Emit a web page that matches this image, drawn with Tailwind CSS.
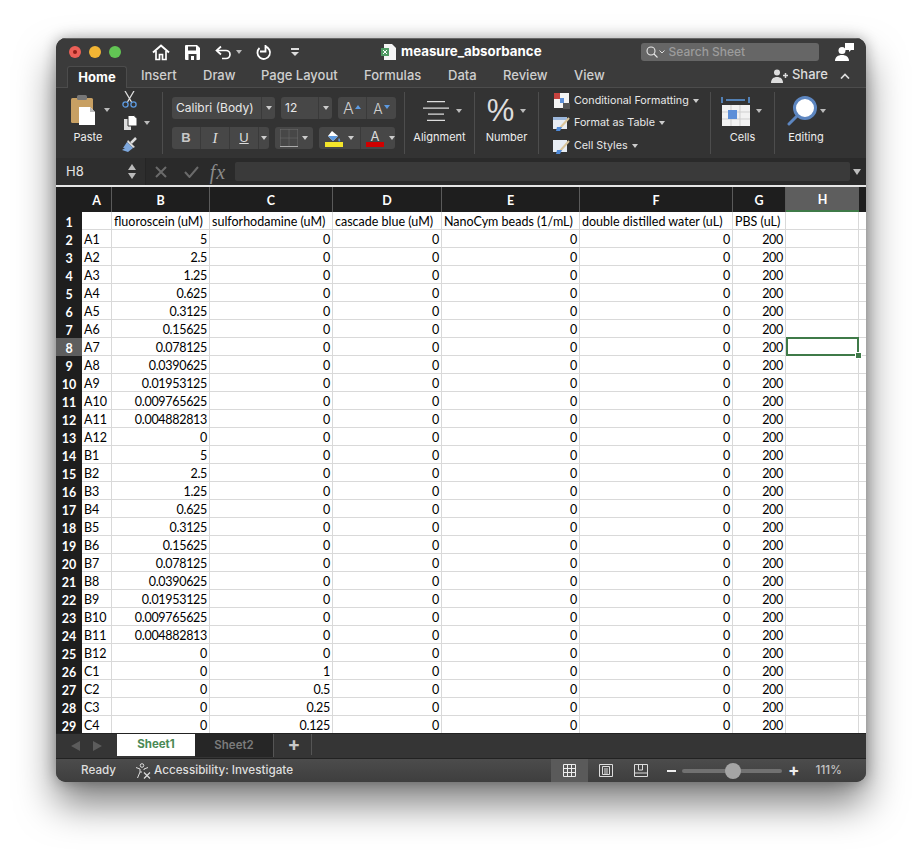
<!DOCTYPE html>
<html lang="en">
<head>
<meta charset="UTF-8">
<title>measure_absorbance</title>
<script src="https://cdn.jsdelivr.net/npm/@tailwindcss/browser@4"></script>
</head>
<body class="bg-white w-[922px] h-[856px] overflow-hidden pt-[38px] pl-[56px] font-['Inter','Roboto',sans-serif]">
<div class="w-[810px] h-[744px] rounded-[10px] overflow-hidden flex flex-col bg-[#333] shadow-[0_22px_38px_rgba(0,0,0,0.5),0_0_14px_rgba(0,0,0,0.3)] relative">

  <!-- title bar -->
  <div class="h-[27px] shrink-0 bg-[#3b3b3b] flex items-center relative border-t border-[#666]">
    <span class="w-3 h-3 rounded-full bg-[#ec5f57] ml-[13px] flex items-center justify-center"><span class="w-1 h-1 rounded-full bg-[#8f1d17]"></span></span>
    <span class="w-3 h-3 rounded-full bg-[#f2b534] ml-2"></span>
    <span class="w-3 h-3 rounded-full bg-[#62c554] ml-2"></span>
    <svg class="ml-[31px] w-[18px] h-[18px]" viewBox="0 0 18 18" fill="none" stroke="#fff" stroke-width="2"><path d="M1 9.500 9 2.500l8 7"/><path stroke-width="1.700" d="M4 8v8.500h3.500v-5h3v5H14V8"/></svg>
    <svg class="ml-[15px] w-[15px] h-[15px]" viewBox="0 0 15 15"><path fill="#fff" d="M1 0h11l3 3v11a1 1 0 0 1-1 1H1a1 1 0 0 1-1-1V1a1 1 0 0 1 1-1z"/><path fill="#3b3b3b" d="M3 1.500h8v4H3zM3.500 9h8v6h-8z"/><path fill="#fff" d="M6 11h3v4H6z"/></svg>
    <svg class="ml-[15px] w-[17px] h-[15px]" viewBox="0 0 17 15" fill="none" stroke="#fff" stroke-width="1.700"><path d="M6 1.500 1.500 5.500 6 9.500"/><path d="M2 5.500h9a4 4 0 0 1 0 8H7"/></svg>
    <span class="ml-[4px] border-x-[3px] border-t-[4px] border-x-transparent border-t-[#bbb]"></span>
    <svg class="ml-[13px] w-[17px] h-[17px]" viewBox="0 0 17 17" fill="none" stroke="#fff" stroke-width="1.800"><path d="M10 2.500a6.300 6.300 0 1 1-5.500 1.500"/><path d="M10.500 1v6.500H5"/></svg>
    <span class="ml-[19px] flex flex-col items-center gap-[2px]"><span class="w-2 h-[1.5px] bg-[#ddd]"></span><span class="border-x-[4px] border-t-[4px] border-x-transparent border-t-[#ddd]"></span></span>
    <svg class="ml-[82px] w-[15px] h-[16px]" viewBox="0 0 15 16"><path fill="#f4f4f4" d="M3 0h8l4 4v12H3z"/><path fill="#4f9a63" d="M0 4h8v8H0z"/><path stroke="#fff" d="m2 6 4 4M6 6l-4 4"/></svg>
    <span class="ml-[5px] text-white font-bold text-[13.3px]">measure_absorbance</span>
    <div class="ml-[99px] w-[178px] h-[18px] rounded-[3px] bg-[#666] flex items-center pl-[5px]">
      <svg class="w-[12px] h-[12px]" viewBox="0 0 12 12" fill="none" stroke="#e8e8e8" stroke-width="1.1"><circle cx="5" cy="5" r="4"/><path d="m8 8 3.500 3.500"/></svg>
      <svg class="w-[6px] h-[4px] ml-[1px]" viewBox="0 0 6 4" fill="none" stroke="#ddd"><path d="m.5.500 2.500 2.500L5.500.500"/></svg>
      <span class="ml-[4px] text-[12px] text-[#9c9c9c] font-medium">Search Sheet</span>
    </div>
    <svg class="ml-[16px] w-[20px] h-[18px]" viewBox="0 0 20 18"><path fill="#fff" d="M10 0h9v7h-3l-2 2V7h-4z"/><circle cx="7" cy="7.500" r="3.500" fill="#fff"/><path fill="#fff" d="M0 18c0-4 3-6 7-6s7 2 7 6z"/></svg>
  </div>

  <!-- ribbon tabs -->
  <div class="h-[23px] shrink-0 bg-[#3b3b3b] flex items-end border-b border-[#4c4c4c] text-[13px] text-[#cfcfcf] font-medium relative">
    <div class="ml-[11px] w-[60px] h-[22px] bg-[#333] border border-b-0 border-[#4c4c4c] rounded-t-[3px] text-white font-bold text-center leading-[21px] -mb-px">Home</div>
    <div class="flex h-[22px] leading-[21px] ml-[14px]">
      <span class="w-[62px]">Insert</span>
      <span class="w-[58px]">Draw</span>
      <span class="w-[103px]">Page Layout</span>
      <span class="w-[84px]">Formulas</span>
      <span class="w-[55px]">Data</span>
      <span class="w-[71px]">Review</span>
      <span class="w-[50px]">View</span>
    </div>
    <div class="ml-auto flex items-center h-[22px] mr-[16px]">
      <svg class="w-[17px] h-[14px]" viewBox="0 0 17 14"><circle cx="6" cy="3.500" r="3" fill="#ddd"/><path fill="#ddd" d="M0 14c0-4 2.500-6 6-6s6 2 6 6z"/><path stroke="#ddd" stroke-width="1.500" d="M12 6.500h5M14.500 4v5"/></svg>
      <span class="ml-[4px] text-[13px] text-[#ddd] -mt-[2px]">Share</span>
      <svg class="ml-[12px] w-[10px] h-[6px]" viewBox="0 0 10 6" fill="none" stroke="#ddd" stroke-width="1.700"><path d="m1 5.500 4-4 4 4"/></svg>
    </div>
  </div>

  <!-- ribbon -->
  <div class="h-[70px] shrink-0 bg-[#333] flex items-stretch py-1 text-[#e4e4e4] text-[11px]">
    <!-- clipboard -->
    <div class="w-[107px] shrink-0 border-r border-[#4d4d4d] flex pl-[14px]">
      <div class="w-[44px] flex flex-col items-center pr-[8px]">
        <svg class="w-[25px] h-[30px] mt-[3px] self-start ml-[1px]" viewBox="0 0 25 30"><rect x="0" y="3" width="22" height="25" rx="1.500" fill="#c8a063"/><rect x="6" y="0" width="10" height="5" rx="1.500" fill="#777"/><path fill="#fff" d="M8 12h11l5 5v13H8z"/><path fill="#bbb" d="M19 12v5h5z"/></svg>
        <span class="mt-[4px] text-[#eee]">Paste</span>
      </div>
      <span class="mt-[16px] -ml-[10px] self-start border-x-[3px] border-t-[4px] border-x-transparent border-t-[#bbb]"></span>
      <div class="ml-[12px] flex flex-col items-start gap-[7px] mt-[-1px] relative">
        <svg class="w-[15px] h-[17px]" viewBox="0 0 15 17" fill="none"><path stroke="#ddd" stroke-width="1.300" d="m3 0 6.500 11M12 0 5.500 11"/><circle cx="3.500" cy="13.500" r="2.600" stroke="#5d9ae0" stroke-width="1.300"/><circle cx="11.500" cy="13.500" r="2.600" stroke="#5d9ae0" stroke-width="1.300"/></svg>
        <div class="flex items-center gap-[7px] ml-[2px]">
          <svg class="w-[13px] h-[15px]" viewBox="0 0 13 15"><path fill="#ddd" d="M0 4h7v11H0z"/><path fill="#fff" stroke="#333" d="M4 .5h6l3 3V11H4z"/></svg>
          <span class="border-x-[3px] border-t-[4px] border-x-transparent border-t-[#bbb]"></span>
        </div>
        <svg class="w-[16px] h-[15px]" viewBox="0 0 16 15"><path stroke="#ddd" stroke-width="2.500" d="m9 6 5-5"/><path fill="#d8d8d8" d="m6 3 7 7-2 1-6-6z"/><path fill="#7da7dc" d="M5 5l6 6-5 4-6-2 3-2-2 0z"/></svg>
      </div>
    </div>
    <!-- font -->
    <div class="w-[242px] shrink-0 border-r border-[#4d4d4d] pl-[9px] pt-[5px] flex flex-col gap-[8px]">
      <div class="flex gap-[6px] h-[22px] text-[12px] text-[#e8e8e8]">
        <div class="w-[103px] bg-[#474747] rounded-[3px] flex items-center pl-[4px]"><span class="flex-1">Calibri (Body)</span><span class="w-[14px] h-full border-l border-[#3a3a3a] flex items-center justify-center"><span class="border-x-[3px] border-t-[4px] border-x-transparent border-t-[#ccc]"></span></span></div>
        <div class="w-[51px] bg-[#474747] rounded-[3px] flex items-center pl-[4px]"><span class="flex-1">12</span><span class="w-[14px] h-full border-l border-[#3a3a3a] flex items-center justify-center"><span class="border-x-[3px] border-t-[4px] border-x-transparent border-t-[#ccc]"></span></span></div>
        <div class="w-[58px] bg-[#474747] rounded-[3px] flex items-center text-[#d0d0d0]">
          <span class="w-[29px] h-full border-r border-[#3a3a3a] flex items-center justify-center gap-[1px] text-[16px] font-light">A<span class="border-x-[3.5px] border-b-[4px] border-x-transparent border-b-[#5d9ae0] -mt-[3px]"></span></span>
          <span class="w-[29px] h-full flex items-center justify-center gap-[1px] text-[14px] font-light">A<span class="border-x-[3.5px] border-t-[4px] border-x-transparent border-t-[#5d9ae0] -mt-[3px]"></span></span>
        </div>
      </div>
      <div class="flex gap-[6px] h-[22px] text-[#dcdcdc]">
        <div class="w-[97px] bg-[#474747] rounded-[3px] flex items-center text-[13px]">
          <span class="w-[29px] h-full border-r border-[#3a3a3a] flex items-center justify-center font-bold font-['Liberation_Sans'] text-[#c8c8c8]">B</span>
          <span class="w-[29px] h-full border-r border-[#3a3a3a] flex items-center justify-center italic font-['Liberation_Serif'] text-[15px]">I</span>
          <span class="w-[29px] h-full border-r border-[#3a3a3a] flex items-center justify-center underline font-['Liberation_Sans']">U</span>
          <span class="flex-1 flex justify-center"><span class="border-x-[3px] border-t-[4px] border-x-transparent border-t-[#ccc]"></span></span>
        </div>
        <div class="w-[38px] bg-[#474747] rounded-[3px] flex items-center">
          <svg class="w-[18px] h-[18px] ml-[5px]" viewBox="0 0 18 18" fill="none" stroke="#6f6f6f"><path d="M.5.500h17M.5 9h17M9 .5v17M.5.500v17M17.500.500v17" stroke-dasharray="1 1"/><path d="M0 17.500h18" stroke="#aaa" stroke-width="1.200"/></svg>
          <span class="ml-[4px] border-x-[3px] border-t-[4px] border-x-transparent border-t-[#ccc]"></span>
        </div>
        <div class="w-[76px] bg-[#474747] rounded-[3px] flex items-center">
          <div class="w-[25px] ml-[2px] flex flex-col items-center">
            <svg class="w-[14px] h-[12px]" viewBox="0 0 14 12"><path fill="#fff" d="m5 1 6 5-5 5-5-5z"/><path fill="#5d9ae0" d="M1 6h10l-5 5zM12 8c1 1.500 2 3 .5 3.500S11 9 12 8z"/></svg>
            <span class="w-[18px] h-[5px] bg-[#f4e52a]"></span>
          </div>
          <span class="ml-[2px] border-x-[3px] border-t-[4px] border-x-transparent border-t-[#ccc]"></span>
          <div class="ml-[6px] pl-[5px] h-full border-l border-[#3a3a3a] w-[29px] flex flex-col items-start justify-center">
            <span class="text-[13px] leading-[12px] w-[18px] text-center">A</span>
            <span class="w-[18px] h-[5px] bg-[#d00000]"></span>
          </div>
          <span class="border-x-[3px] border-t-[4px] border-x-transparent border-t-[#ccc]"></span>
        </div>
      </div>
    </div>
    <!-- alignment -->
    <div class="w-[70px] shrink-0 border-r border-[#4d4d4d] flex flex-col items-center">
      <div class="h-[37px] flex items-center gap-[7px] ml-[5px]">
        <svg class="w-[26px] h-[20px]" viewBox="0 0 26 20" stroke="#ddd" stroke-width="1.300"><path d="M4 .7h18M0 7.200h26M5 13.200h16M4 19.300h18"/></svg>
        <span class="border-x-[3px] border-t-[4px] border-x-transparent border-t-[#bbb]"></span>
      </div>
      <span class="text-[#eee]">Alignment</span>
    </div>
    <!-- number -->
    <div class="w-[64px] shrink-0 border-r border-[#4d4d4d] flex flex-col items-center">
      <div class="h-[37px] flex items-center gap-[6px]">
        <span class="text-[31px] leading-none font-normal text-[#ddd] font-['Liberation_Sans']">%</span>
        <span class="border-x-[3px] border-t-[4px] border-x-transparent border-t-[#bbb]"></span>
      </div>
      <span class="text-[#eee]">Number</span>
    </div>
    <!-- styles -->
    <div class="w-[172px] shrink-0 border-r border-[#4d4d4d] pl-[14px] pt-px flex flex-col gap-[6px] text-[#e8e8e8] text-[10.75px]">
      <div class="flex items-center gap-[4px] h-[17px]">
        <svg class="w-[17px] h-[16px]" viewBox="0 0 17 16"><path fill="#f4f4f4" d="M1 0h15v15H1z"/><path fill="#c7433f" d="M1 0h6v6H1z"/><path fill="#5d8fd8" d="M7 5h4v5H7z"/><path fill="#555" d="M10 10h7v6h-7z"/></svg>
        <span>Conditional Formatting</span><span class="border-x-[3px] border-t-[4px] border-x-transparent border-t-[#ccc]"></span>
      </div>
      <div class="flex items-center gap-[4px] h-[17px]">
        <svg class="w-[17px] h-[16px]" viewBox="0 0 17 16"><path fill="#e8edf4" d="M0 2h14v12H0z"/><path fill="#9db8dc" d="M0 2h14v3H0z"/><path stroke="#d9c49a" stroke-width="2" d="m7 13 9-10"/><path fill="#4f8ad8" d="M4 12h5l-2 4H3z"/></svg>
        <span>Format as Table</span><span class="border-x-[3px] border-t-[4px] border-x-transparent border-t-[#ccc]"></span>
      </div>
      <div class="flex items-center gap-[4px] h-[17px]">
        <svg class="w-[17px] h-[16px]" viewBox="0 0 17 16"><path fill="#e8edf4" d="M0 2h14v12H0z"/><path stroke="#d9c49a" stroke-width="2" d="m7 13 9-10"/><path fill="#4f8ad8" d="M4 12h5l-2 4H3z"/></svg>
        <span>Cell Styles</span><span class="border-x-[3px] border-t-[4px] border-x-transparent border-t-[#ccc]"></span>
      </div>
    </div>
    <!-- cells -->
    <div class="w-[64px] shrink-0 border-r border-[#4d4d4d] flex flex-col items-center">
      <div class="h-[37px] flex items-center gap-[6px] -ml-[2px]">
        <svg class="w-[29px] h-[30px]" viewBox="0 0 29 30"><path stroke="#5d9ae0" stroke-width="1.500" fill="none" d="M1 1v6M28 1v6M5 4h19"/><path fill="#f2f2f2" d="M1 9h28v21H1z"/><path stroke="#cfcfcf" d="M10 9v21M19 9v21M1 16h28M1 23h28"/><path fill="#5d8fd8" d="M7 14h9v9H7z"/></svg>
        <span class="border-x-[3px] border-t-[4px] border-x-transparent border-t-[#bbb]"></span>
      </div>
      <span class="text-[#eee]">Cells</span>
    </div>
    <!-- editing -->
    <div class="w-[62px] shrink-0 flex flex-col items-center">
      <div class="h-[37px] flex items-center gap-[3px]">
        <svg class="w-[30px] h-[30px]" viewBox="0 0 30 30"><path stroke="#5d86c0" stroke-width="3" stroke-linecap="round" d="M2 28 11 19"/><circle cx="18" cy="12" r="10.500" fill="#fff" stroke="#5d86c0" stroke-width="3"/></svg>
        <span class="border-x-[3px] border-t-[4px] border-x-transparent border-t-[#bbb]"></span>
      </div>
      <span class="text-[#eee]">Editing</span>
    </div>
  </div>

  <!-- formula bar -->
  <div class="h-[27px] shrink-0 bg-[#2a2a2a] flex items-center border-b-2 border-[#e6e6e6] box-content relative">
    <div class="w-[90px] h-full bg-[#2e2e2e] flex items-center pl-[10px] text-[13px] text-[#e4e4e4] border-r border-[#252525]">
      <span class="flex-1">H8</span>
      <span class="flex flex-col gap-[3px] mr-[9px]"><span class="border-x-[4px] border-b-[6px] border-x-transparent border-b-[#bbb]"></span><span class="border-x-[4px] border-t-[6px] border-x-transparent border-t-[#bbb]"></span></span>
    </div>
    <svg class="ml-[9px] w-[12px] h-[12px]" viewBox="0 0 12 12" stroke="#6a6a6a" stroke-width="2"><path d="m1 1 10 10M11 1 1 11"/></svg>
    <svg class="ml-[17px] w-[15px] h-[12px]" viewBox="0 0 15 12" stroke="#6a6a6a" stroke-width="2" fill="none"><path d="m1 6 4.500 5L14 1"/></svg>
    <span class="ml-[8px] w-[22px] font-['Liberation_Serif'] italic text-[#8a8a8a] text-[20px] tracking-[1px] text-center">fx</span>
    <div class="ml-[6px] w-[615px] h-[19px] bg-[#3a3a3a] rounded-[2px]"></div>
    <span class="ml-[3px] border-x-[4px] border-t-[6px] border-x-transparent border-t-[#bdbdbd]"></span>
  </div>

  <!-- sheet -->
  <div id="sheet" class="flex-1 min-h-0 overflow-hidden bg-white grid grid-cols-[26px_30px_98px_123px_109px_138px_153px_53px_73px_7px] grid-rows-[25px] auto-rows-[18px] content-start font-['Lato',sans-serif] text-[12.5px] text-black relative">
  </div>

  <!-- sheet tabs -->
  <div class="h-[26px] shrink-0 bg-[#353535] flex items-start border-t border-[#222] border-b border-b-[#222]">
    <svg class="ml-[15px] mt-[7px] w-[9px] h-[10px]" viewBox="0 0 9 10" fill="#5c5c5c"><path d="M9 0v10L0 5z"/></svg>
    <svg class="ml-[13px] mt-[7px] w-[9px] h-[10px]" viewBox="0 0 9 10" fill="#5c5c5c"><path d="M0 0v10l9-5z"/></svg>
    <div class="ml-[15px] w-[78px] h-[22px] bg-white text-[#4a8a55] font-bold text-[11.5px] flex items-center justify-center">Sheet1</div>
    <div class="w-[79px] h-[23px] bg-[#262626] text-[#7b7b7b] font-semibold text-[11.5px] flex items-center justify-center border-r border-[#555]">Sheet2</div>
    <div class="w-[38px] h-[21px] pl-[3px] border-r border-[#555] flex items-center justify-center text-[#c8c8c8] text-[19px] font-bold leading-none">+</div>
  </div>

  <!-- status bar -->
  <div class="h-[23px] shrink-0 bg-linear-to-b from-[#4c4c4c] to-[#3e3e3e] flex items-center text-[11.7px] text-[#dedede] font-medium">
    <span class="ml-[25px]">Ready</span>
    <svg class="ml-[19px] w-[16px] h-[16px]" viewBox="0 0 16 16" fill="none" stroke="#ddd"><circle cx="7" cy="2.500" r="1.800"/><path d="M1 4.500 5 6v3l-2.500 6M13 4.500 9 6v1M5 9h2"/><path d="m9 9.500 6 6M15 9.500l-6 6" stroke-width="1.200"/></svg>
    <span class="ml-[3px]">Accessibility: Investigate</span>
    <div class="ml-[258px] w-[37px] h-full bg-[#5a5a5a] flex items-center justify-center">
      <svg class="w-[13px] h-[13px]" viewBox="0 0 13 13" fill="none" stroke="#eee"><path d="M.5.500h12v12H.5zM4.500.500v12M8.500.500v12M.5 4.500h12M.5 8.500h12"/></svg>
    </div>
    <svg class="ml-[11px] w-[14px] h-[13px]" viewBox="0 0 14 13" fill="none" stroke="#ddd"><path d="M.5.500h13v12H.5zM3.500 2.500h7v8h-7zM5 5h4M5 7h4M5 9h4"/></svg>
    <svg class="ml-[21px] w-[14px] h-[13px]" viewBox="0 0 14 13" fill="none" stroke="#ddd"><path d="M.5.500h13v12H.5zM.5 9h13M4.500.500V6h4V.500"/></svg>
    <span class="ml-[19px] w-[9px] h-[2px] bg-[#eee]"></span>
    <div class="ml-[6px] w-[100px] h-[4px] rounded-full bg-[#717171] relative">
      <span class="absolute left-[43px] -top-[6px] w-4 h-4 rounded-full bg-[#a5a5a5]"></span>
    </div>
    <span class="ml-[6px] text-[17px] font-bold text-[#eee] leading-none">+</span>
    <span class="ml-[16px] text-[#c4c4c4]">111%</span>
  </div>
</div>

<script>
  const headers = ['A', 'B', 'C', 'D', 'E', 'F', 'G', 'H'];
  const first = ['', 'fluoroscein (uM)', 'sulforhodamine (uM)', 'cascade blue (uM)', 'NanoCym beads (1/mL)', 'double distilled water (uL)', 'PBS (uL)', ''];
  const dilution = ['5', '2.5', '1.25', '0.625', '0.3125', '0.15625', '0.078125', '0.0390625', '0.01953125', '0.009765625', '0.004882813', '0'];

  const rows = [];
  ['A', 'B'].forEach(letter => dilution.forEach((v, i) => rows.push([letter + (i + 1), v, '0'])));
  ['1', '0.5', '0.25', '0.125'].forEach((v, i) => rows.push(['C' + (i + 1), '0', v]));

  const sheet = document.getElementById('sheet');
  const add = (cls, text) => {
    const el = document.createElement('div');
    el.className = cls;
    el.textContent = text || '';
    sheet.appendChild(el);
    return el;
  };

  const num = 'border-r border-b border-[#d9d9d9] px-[2px] pt-1 tracking-[-0.3px] flex items-center justify-end';

  // column headers
  add('bg-[#1e1e1e]');
  headers.forEach(h => add(h === 'H'
    ? 'bg-[#5e5e5e] border-b-2 border-[#3f7a48] pt-[3px] text-white font-bold flex items-center justify-center'
    : 'bg-[#1e1e1e] border-r border-[#5a5a5a] pt-1 text-white font-bold flex items-center justify-center', h));
  add('bg-[#1e1e1e]');

  // first row
  add('bg-[#1e1e1e] pt-1 text-white font-bold flex items-center justify-center', '1');
  first.forEach(t => add('border-r border-b border-[#d9d9d9] px-[2px] pt-1 flex items-center whitespace-nowrap overflow-hidden', t));
  add('border-b border-[#d9d9d9]');

  // data rows
  rows.forEach((r, i) => {
    const n = i + 2;
    add(n === 8
      ? 'bg-[#5e5e5e] pt-1 text-white font-bold flex items-center justify-center'
      : 'bg-[#1e1e1e] pt-1 text-white font-bold flex items-center justify-center', String(n));
    add('border-r border-b border-[#d9d9d9] px-[2px] pt-1 flex items-center', r[0]);
    add(num, r[1]);
    add(num, r[2]);
    ['0', '0', '0', '200'].forEach(v => add(num, v));
    add(n === 8
      ? 'border-2 border-[#3f7a48] -mt-px relative'
      : 'border-r border-b border-[#d9d9d9]');
    add('border-b border-[#d9d9d9]');
  });

  // fill handle of the selected cell
  const handle = document.createElement('span');
  handle.className = 'absolute left-[799px] top-[165px] w-[5px] h-[5px] bg-[#3f7a48] border border-white box-content';
  sheet.appendChild(handle);
</script>
</body>
</html>
